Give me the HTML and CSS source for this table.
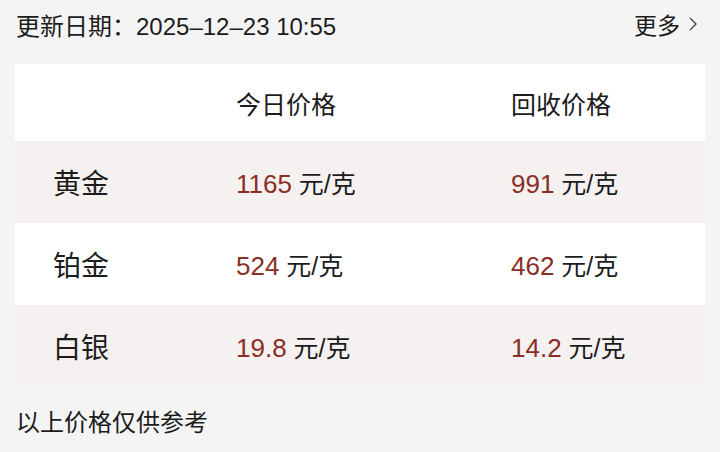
FILE: index.html
```html
<!DOCTYPE html>
<html lang="zh-CN">
<head>
<meta charset="utf-8">
<link rel="stylesheet" href="styles.css">
</head>
<body>
<div class="page">
  <div class="topbar">
    <span class="date">更新日期：2025–12–23 10:55</span>
    <span class="more">更多<svg class="chev" width="10" height="16" viewBox="0 0 10 16"><path d="M2 2 L8 8 L2 14" fill="none" stroke="#444" stroke-width="1.4"/></svg></span>
  </div>
  <div class="card">
    <div class="row head">
      <span></span>
      <span>今日价格</span>
      <span>回收价格</span>
    </div>
    <div class="row tint">
      <span class="name">黄金</span>
      <span class="price"><b>1165</b> 元/克</span>
      <span class="price"><b>991</b> 元/克</span>
    </div>
    <div class="row">
      <span class="name">铂金</span>
      <span class="price"><b>524</b> 元/克</span>
      <span class="price"><b>462</b> 元/克</span>
    </div>
    <div class="row tint">
      <span class="name">白银</span>
      <span class="price"><b>19.8</b> 元/克</span>
      <span class="price"><b>14.2</b> 元/克</span>
    </div>
  </div>
  <div class="note">以上价格仅供参考</div>
</div>
</body>
</html>
```
FILE: styles.css
```css
* { box-sizing: border-box; }
html, body { margin: 0; padding: 0; }
body {
  background: #f4f4f4;
  font-family: "Liberation Sans", "Noto Sans CJK SC", sans-serif;
  color: #1c1c1c;
  width: 720px;
  height: 452px;
  overflow: hidden;
}
.page {
  padding: 0 15px;
}
.topbar {
  height: 52px;
  display: flex;
  align-items: center;
  justify-content: space-between;
  font-size: 24px;
  padding: 0 0 0 1px;
  margin-top: -2px;
}
.more {
  display: flex;
  align-items: center;
  gap: 8px;
  margin-right: 7px;
  font-size: 23px;
}
.card {
  margin-top: 14px;
  background: #ffffff;
  display: flex;
  flex-direction: column;
}
.row {
  display: grid;
  grid-template-columns: 183px 275px 1fr;
  padding-left: 38px;
  height: 82px;
  align-items: center;
  font-size: 25px;
}
.row.head {
  height: 77px;
  font-size: 25px;
}
.row.tint {
  background: #f5f1f0;
}
.name {
  font-size: 28px;
}
.price b {
  font-weight: normal;
  color: #8a2f24;
  font-size: 26px;
}
.note {
  margin-top: 16px;
  font-size: 24px;
  padding-left: 1px;
}
```
